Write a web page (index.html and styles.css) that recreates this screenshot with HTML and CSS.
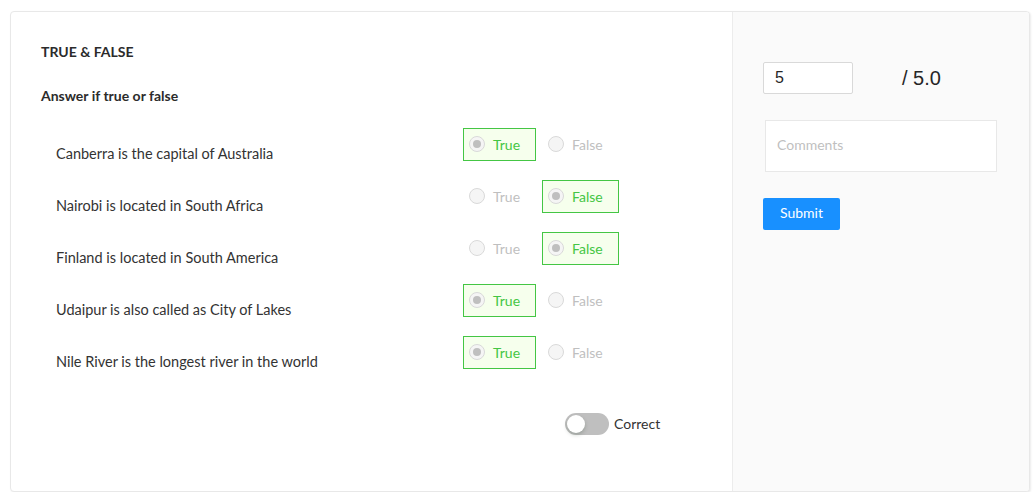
FILE: index.html
```html
<!DOCTYPE html>
<html>
<head>
<meta charset="utf-8">
<link rel="stylesheet" href="styles.css">
</head>
<body>
<div class="card">
  <div class="main">
    <div class="title">TRUE &amp; FALSE</div>
    <div class="subtitle">Answer if true or false</div>
    <div class="rows">
      <div class="row">
        <div class="question">Canberra is the capital of Australia</div>
        <div class="options">
          <div class="opt selected"><span class="radio checked"></span><span>True</span></div>
          <div class="opt"><span class="radio"></span><span>False</span></div>
        </div>
      </div>
      <div class="row">
        <div class="question">Nairobi is located in South Africa</div>
        <div class="options">
          <div class="opt"><span class="radio"></span><span>True</span></div>
          <div class="opt selected"><span class="radio checked"></span><span>False</span></div>
        </div>
      </div>
      <div class="row">
        <div class="question">Finland is located in South America</div>
        <div class="options">
          <div class="opt"><span class="radio"></span><span>True</span></div>
          <div class="opt selected"><span class="radio checked"></span><span>False</span></div>
        </div>
      </div>
      <div class="row">
        <div class="question">Udaipur is also called as City of Lakes</div>
        <div class="options">
          <div class="opt selected"><span class="radio checked"></span><span>True</span></div>
          <div class="opt"><span class="radio"></span><span>False</span></div>
        </div>
      </div>
      <div class="row">
        <div class="question">Nile River is the longest river in the world</div>
        <div class="options">
          <div class="opt selected"><span class="radio checked"></span><span>True</span></div>
          <div class="opt"><span class="radio"></span><span>False</span></div>
        </div>
      </div>
    </div>
    <div class="footer">
      <span class="switch"><span class="knob"></span></span>
      <span class="switch-label">Correct</span>
    </div>
  </div>
  <div class="side">
    <div class="score">
      <div class="score-input">5</div>
      <div class="score-total">/ 5.0</div>
    </div>
    <div class="comments">Comments</div>
    <button class="submit">Submit</button>
  </div>
</div>
</body>
</html>
```

FILE: styles.css
```css
html, body {
  margin: 0;
  padding: 0;
  background: #ffffff;
}
body {
  padding: 11px 0 0 10px;
  font-family: Lato, "Noto Sans", sans-serif;
  color: #333333;
}
.card {
  box-sizing: border-box;
  width: 1020px;
  height: 481px;
  display: flex;
  border: 1px solid #e8e8e8;
  border-radius: 4px;
  box-shadow: 1px 1px 2px rgba(0, 0, 0, 0.08);
  overflow: hidden;
  background: #ffffff;
}
.main {
  box-sizing: border-box;
  width: 721px;
  padding: 30px 0 0 30px;
}
.title {
  font-size: 14px;
  font-weight: 700;
  line-height: 20px;
  color: #2b2b2b;
}
.subtitle {
  margin-top: 24px;
  font-size: 14px;
  font-weight: 700;
  line-height: 20px;
  color: #2b2b2b;
}
.rows {
  margin-top: 22px;
  display: flex;
  flex-direction: column;
  gap: 16px;
}
.row {
  display: flex;
  align-items: flex-start;
  height: 36px;
}
.question {
  flex: 0 0 422px;
  box-sizing: border-box;
  padding: 15px 0 0 15px;
  font-size: 14.5px;
  line-height: 22px;
  color: #333333;
}
.options {
  display: flex;
  gap: 6px;
}
.opt {
  box-sizing: border-box;
  height: 33px;
  display: flex;
  align-items: center;
  gap: 8px;
  padding: 0 15px 1px 5px;
  border: 1px solid transparent;
  font-size: 14px;
  color: #bfbfbf;
}
.opt.selected {
  border-color: #44c644;
  background: #f6ffed;
  color: #44c644;
}
.radio {
  box-sizing: border-box;
  width: 16px;
  height: 16px;
  border-radius: 50%;
  border: 1px solid #d9d9d9;
  background: #f5f5f5;
  display: flex;
  align-items: center;
  justify-content: center;
}
.radio.checked::after {
  content: "";
  width: 8px;
  height: 8px;
  border-radius: 50%;
  background: #bfbfbf;
}
.footer {
  margin-top: 41px;
  padding-left: 524px;
  display: flex;
  align-items: center;
  gap: 5px;
}
.switch {
  position: relative;
  width: 44px;
  height: 22px;
  border-radius: 11px;
  background: #bfbfbf;
}
.knob {
  position: absolute;
  left: 2px;
  top: 2px;
  width: 18px;
  height: 18px;
  border-radius: 50%;
  background: #ffffff;
  box-shadow: 0 2px 4px rgba(0, 35, 11, 0.2);
}
.switch-label {
  font-size: 14px;
  color: #333333;
  padding-bottom: 2px;
}
.side {
  flex: 1;
  background: #fafafa;
  border-left: 1px solid #ececec;
  padding: 50px 0 0 30px;
}
.score {
  display: flex;
  align-items: center;
  gap: 49px;
}
.score-input {
  box-sizing: border-box;
  width: 90px;
  height: 32px;
  border: 1px solid #d9d9d9;
  border-radius: 2px;
  background: #ffffff;
  padding-left: 11px;
  font-family: "Liberation Sans", Arial, sans-serif;
  font-size: 16px;
  line-height: 30px;
  color: #262626;
}
.score-total {
  font-family: "Liberation Sans", Arial, sans-serif;
  font-size: 20px;
  color: #262626;
}
.comments {
  box-sizing: border-box;
  margin: 26px 0 0 2px;
  width: 232px;
  height: 52px;
  border: 1px solid #e8e8e8;
  background: #ffffff;
  padding: 14px 0 0 11px;
  font-size: 14px;
  line-height: 20px;
  color: #bfbfbf;
}
.submit {
  margin-top: 26px;
  display: block;
  width: 77px;
  height: 32px;
  border: none;
  border-radius: 2px;
  background: #1890ff;
  color: #ffffff;
  font-family: Lato, "Noto Sans", sans-serif;
  font-size: 14px;
  line-height: 30px;
  padding: 0 0 2px;
}
```
